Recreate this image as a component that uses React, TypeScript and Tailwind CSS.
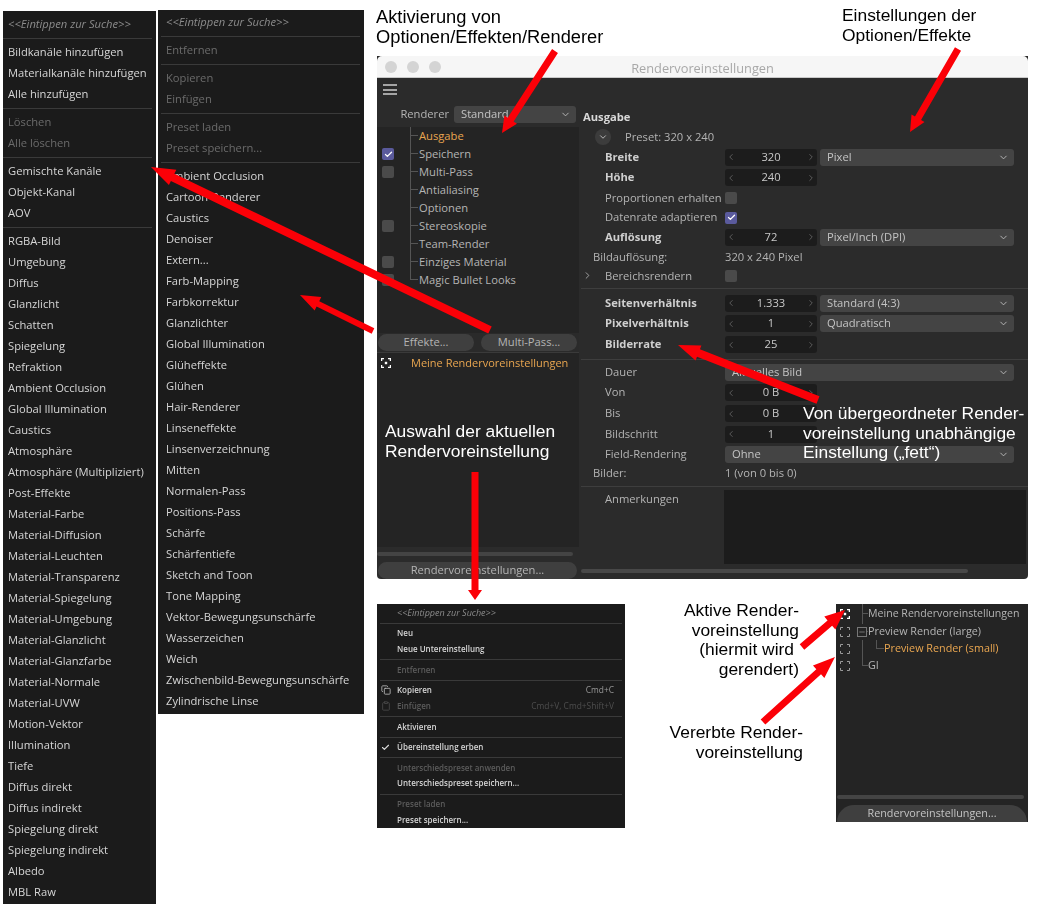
import { Check, ChevronDown, ChevronLeft, ChevronRight, Clipboard, Copy, Minus } from 'lucide-react';

const sans = 'font-["Open_Sans",sans-serif]';

// '-' is a divider, '~' marks a greyed out entry
const channelMenu = [
    '-', 'Bildkanäle hinzufügen', 'Materialkanäle hinzufügen', 'Alle hinzufügen', '-',
    '~Löschen', '~Alle löschen', '-',
    'Gemischte Kanäle', 'Objekt-Kanal', 'AOV', '-',
    'RGBA-Bild', 'Umgebung', 'Diffus', 'Glanzlicht', 'Schatten', 'Spiegelung', 'Refraktion',
    'Ambient Occlusion', 'Global Illumination', 'Caustics', 'Atmosphäre', 'Atmosphäre (Multipliziert)',
    'Post-Effekte', 'Material-Farbe', 'Material-Diffusion', 'Material-Leuchten', 'Material-Transparenz',
    'Material-Spiegelung', 'Material-Umgebung', 'Material-Glanzlicht', 'Material-Glanzfarbe',
    'Material-Normale', 'Material-UVW', 'Motion-Vektor', 'Illumination', 'Tiefe', 'Diffus direkt',
    'Diffus indirekt', 'Spiegelung direkt', 'Spiegelung indirekt', 'Albedo', 'MBL Raw',
];

const effectMenu = [
    '-', '~Entfernen', '-', '~Kopieren', '~Einfügen', '-', '~Preset laden', '~Preset speichern...', '-',
    'Ambient Occlusion', 'Cartoon-Renderer', 'Caustics', 'Denoiser', 'Extern...', 'Farb-Mapping',
    'Farbkorrektur', 'Glanzlichter', 'Global Illumination', 'Glüheffekte', 'Glühen', 'Hair-Renderer',
    'Linseneffekte', 'Linsenverzeichnung', 'Mitten', 'Normalen-Pass', 'Positions-Pass', 'Schärfe',
    'Schärfentiefe', 'Sketch and Toon', 'Tone Mapping', 'Vektor-Bewegungsunschärfe', 'Wasserzeichen',
    'Weich', 'Zwischenbild-Bewegungsunschärfe', 'Zylindrische Linse',
];

const treeItems = [
    { label: 'Ausgabe', box: '', active: true },
    { label: 'Speichern', box: 'on' },
    { label: 'Multi-Pass', box: 'off' },
    { label: 'Antialiasing', box: '' },
    { label: 'Optionen', box: '' },
    { label: 'Stereoskopie', box: 'off' },
    { label: 'Team-Render', box: '' },
    { label: 'Einziges Material', box: 'off' },
    { label: 'Magic Bullet Looks', box: 'off' },
];

function BigMenu({ items, className }: { items: string[]; className: string }) {
    return (
        <div className={`absolute bg-[#1b1b1b] text-[11.2px] ${sans} blur-[0.25px] ${className}`}>
            <div className="h-[21px] flex items-center pl-[5px] italic text-[#8c8c8c]">&lt;&lt;Eintippen zur Suche&gt;&gt;</div>
            {items.map((item, idx) => {
                if (item === '-') {
                    return <div key={idx} className="h-[7px] pt-[3px]"><div className="h-px bg-[#3a3a3a]" /></div>;
                }
                const off = item.startsWith('~');
                return (
                    <div key={idx} className={`h-[21px] flex items-center pl-[5px] whitespace-nowrap ${off ? 'text-[#6b6b6b]' : 'text-[#d6d6d6]'}`}>
                        {off ? item.slice(1) : item}
                    </div>
                );
            })}
        </div>
    );
}

function Box({ on }: { on?: boolean }) {
    return (
        <span className={`w-[12px] h-[12px] rounded-[2px] flex items-center justify-center shrink-0 ${on ? 'bg-[#5a5a9c]' : 'bg-[#4a4a4a]'}`}>
            {on && <Check size={9} strokeWidth={3.5} className="text-white" />}
        </span>
    );
}

function Tick({ last, w = 'w-[8px]', h = 'h-[18px]' }: { last?: boolean; w?: string; h?: string }) {
    return (
        <span className={`${w} ${h} flex flex-col shrink-0`}>
            <span className="h-1/2 border-b border-l border-[#555]" />
            {!last && <span className="h-1/2 border-l border-[#555]" />}
        </span>
    );
}

function TargetIcon({ active }: { active?: boolean }) {
    const color = active ? '#ffffff' : '#9a9a9a';
    return (
        <svg width="10" height="10" viewBox="0 0 10 10" fill="none" stroke={color} strokeWidth={active ? 1.5 : 1} className="shrink-0">
            <path d="M0.5 3V0.5H3M7 0.5H9.5V3M9.5 7V9.5H7M3 9.5H0.5V7" />
            {active && <rect x="3.8" y="3.8" width="2.4" height="2.4" fill={color} stroke="none" />}
        </svg>
    );
}

function NumField({ value }: { value: string }) {
    return (
        <div className="w-[92px] h-[17px] rounded-[3px] bg-[#1c1c1c] flex items-center justify-between px-[1px] text-[#c8c8c8]">
            <ChevronLeft size={10} className="text-[#666]" />
            <span>{value}</span>
            <ChevronRight size={10} className="text-[#666]" />
        </div>
    );
}

function Drop({ value, className = 'w-[194px]' }: { value: string; className?: string }) {
    return (
        <div className={`h-[17px] rounded-[3px] bg-[#444] flex items-center justify-between pl-[7px] pr-[5px] text-[#c4c4c4] ${className}`}>
            <span>{value}</span>
            <ChevronDown size={11} className="text-[#bbb]" />
        </div>
    );
}

function Row({ label, bold, h = 'h-[20px]', children }: { label: string; bold?: boolean; h?: string; children?: React.ReactNode }) {
    return (
        <div className={`flex items-center ${h}`}>
            <div className={`w-[146px] pl-[26px] whitespace-nowrap ${bold ? 'font-bold text-[#cfcfcf]' : 'text-[#b4b4b4]'}`}>{label}</div>
            <div className="flex items-center gap-[3px]">{children}</div>
        </div>
    );
}

function Line({ h, top }: { h: string; top: string }) {
    return <div className={`${h} ${top} pl-[2px]`}><div className="h-px bg-[#3e3e3e]" /></div>;
}

function RenderWindow() {
    return (
        <div className={`absolute left-[377px] top-[56px] w-[651px] h-[523px] rounded-b-[4px] overflow-hidden bg-[#2b2b2b] text-[11.2px] ${sans} blur-[0.25px]`}>
            <div className="relative h-[22px] bg-[#f6f6f6] border-b border-[#c9c9c9] rounded-t-[5px] flex items-center pl-[8px] gap-[10px]">
                <span className="w-[12px] h-[12px] rounded-full bg-[#d4d4d4]" />
                <span className="w-[12px] h-[12px] rounded-full bg-[#d4d4d4]" />
                <span className="w-[12px] h-[12px] rounded-full bg-[#d4d4d4]" />
                <span className="absolute inset-x-0 top-[3px] text-center text-[12.8px] text-[#a8a8a8]">Rendervoreinstellungen</span>
            </div>
            <div className="flex h-[501px]">
                <div className="w-[202px] flex flex-col shrink-0">
                    <div className="h-[28px] pl-[6px] pt-[6px]">
                        <div className="w-[14px] flex flex-col gap-[2.5px]">
                            <span className="h-[2px] bg-[#a5a5a5]" />
                            <span className="h-[2px] bg-[#a5a5a5]" />
                            <span className="h-[2px] bg-[#a5a5a5]" />
                        </div>
                    </div>
                    <div className="h-[17px] flex items-center">
                        <span className="w-[77px] text-right pr-[5px] text-[#b4b4b4]">Renderer</span>
                        <Drop value="Standard" className="w-[122px]" />
                    </div>
                    <div className="h-[4px]" />
                    <div className="flex-1 min-h-0 bg-[#242424] flex flex-col">
                        <div className="h-[206px]">
                            {treeItems.map((item, idx) => (
                                <div key={item.label} className="h-[18px] flex items-center">
                                    <span className="w-[33px] pl-[5px] shrink-0">{item.box && <Box on={item.box === 'on'} />}</span>
                                    <Tick last={idx === treeItems.length - 1} />
                                    <span className={`pl-[1px] ${item.active ? 'text-[#e9a650]' : 'text-[#b4b4b4]'}`}>{item.label}</span>
                                </div>
                            ))}
                        </div>
                        <div className="h-[20px] bg-[#2a2a2a] flex items-start gap-[7px] pl-[1px] text-[#b4b4b4] border-b border-[#3a3a3a]">
                            <div className="w-[96px] h-[17px] mt-[1px] rounded-full bg-[#3f3f3f] flex items-center justify-center">Effekte...</div>
                            <div className="w-[96px] h-[17px] mt-[1px] rounded-full bg-[#3f3f3f] flex items-center justify-center">Multi-Pass...</div>
                        </div>
                        <div className="h-[18px] mt-[1px] flex items-center pl-[4px]">
                            <TargetIcon active />
                            <span className="w-[20px]" />
                            <span className="text-[#e9a650] text-[11px]">Meine Rendervoreinstellungen</span>
                        </div>
                    </div>
                    <div className="h-[32px] flex flex-col">
                        <div className="h-[4px] mt-[5px] w-[196px] rounded-full bg-[#444]" />
                        <div className="w-[199px] h-[17px] ml-[1px] mt-[6px] rounded-full bg-[#3f3f3f] flex items-center justify-center text-[#b4b4b4]">Rendervoreinstellungen...</div>
                    </div>
                </div>

                <div className="flex-1 pt-[30px] min-w-0">
                    <div className="h-[19px] pl-[4px] flex items-center font-bold text-[#d8d8d8]">Ausgabe</div>
                    <div className="h-[20px] pl-[16px] flex items-center text-[#b4b4b4]">
                        <span className="w-[16px] h-[16px] rounded-full bg-[#3c3c3c] flex items-center justify-center mr-[14px]">
                            <ChevronDown size={10} className="text-[#ccc]" />
                        </span>
                        Preset: 320 x 240
                    </div>
                    <Row label="Breite" bold><NumField value="320" /><Drop value="Pixel" /></Row>
                    <Row label="Höhe" bold h="h-[21px]"><NumField value="240" /></Row>
                    <Row label="Proportionen erhalten"><Box /></Row>
                    <Row label="Datenrate adaptieren" h="h-[19px]"><Box on /></Row>
                    <Row label="Auflösung" bold><NumField value="72" /><Drop value="Pixel/Inch (DPI)" /></Row>
                    <div className="h-[20px] flex items-center text-[#b4b4b4]">
                        <span className="w-[146px] pl-[14px]">Bildauflösung:</span>
                        320 x 240 Pixel
                    </div>
                    <div className="relative">
                        <ChevronRight size={11} className="absolute left-[3px] top-[3px] text-[#aaa]" />
                        <Row label="Bereichsrendern" h="h-[18px]"><Box /></Row>
                    </div>
                    <Line h="h-[8px]" top="pt-[3px]" />
                    <Row label="Seitenverhältnis" bold><NumField value="1.333" /><Drop value="Standard (4:3)" /></Row>
                    <Row label="Pixelverhältnis" bold h="h-[21px]"><NumField value="1" /><Drop value="Quadratisch" /></Row>
                    <Row label="Bilderrate" bold h="h-[21px]"><NumField value="25" /></Row>
                    <Line h="h-[7px]" top="pt-[4px]" />
                    <Row label="Dauer"><Drop value="Aktuelles Bild" className="w-[289px]" /></Row>
                    <Row label="Von" h="h-[21px]"><NumField value="0 B" /></Row>
                    <Row label="Bis" h="h-[21px]"><NumField value="0 B" /></Row>
                    <Row label="Bildschritt"><NumField value="1" /></Row>
                    <Row label="Field-Rendering"><Drop value="Ohne" className="w-[289px]" /></Row>
                    <div className="h-[18px] flex items-center text-[#b4b4b4]">
                        <span className="w-[146px] pl-[14px]">Bilder:</span>
                        1 (von 0 bis 0)
                    </div>
                    <Line h="h-[8px]" top="pt-[4px]" />
                    <div className="flex h-[74px]">
                        <div className="w-[145px] pl-[26px] pt-[1px] text-[#b4b4b4]">Anmerkungen</div>
                        <div className="w-[302px] bg-[#1c1c1c]" />
                    </div>
                    <div className="h-[4px] mt-[5px] ml-[2px] w-[387px] rounded-full bg-[#484848]" />
                </div>
            </div>
        </div>
    );
}

const presetMenu: (string | { text: string; off?: boolean; key?: string; icon?: string })[] = [
    '-', { text: 'Neu' }, { text: 'Neue Untereinstellung' }, '-', { text: 'Entfernen', off: true }, '-',
    { text: 'Kopieren', key: 'Cmd+C', icon: 'copy' }, { text: 'Einfügen', off: true, key: 'Cmd+V, Cmd+Shift+V', icon: 'paste' }, '-',
    { text: 'Aktivieren' }, '-', { text: 'Übereinstellung erben', icon: 'check' }, '-',
    { text: 'Unterschiedspreset anwenden', off: true }, { text: 'Unterschiedspreset speichern...' }, '-',
    { text: 'Preset laden', off: true }, { text: 'Preset speichern...' },
];

function PresetMenu() {
    return (
        <div className={`absolute left-[377px] top-[604px] w-[248px] h-[224px] pt-[1px] bg-[#1b1b1b] text-[8px] ${sans} blur-[0.4px]`}>
            <div className="h-[15.5px] flex items-center pl-[20px] italic text-[9px] text-[#8c8c8c]">&lt;&lt;Eintippen zur Suche&gt;&gt;</div>
            {presetMenu.map((item, idx) => {
                if (typeof item === 'string') {
                    return <div key={idx} className="h-[5.2px] px-[3px] pt-[2.4px]"><div className="h-px bg-[#3a3a3a]" /></div>;
                }
                return (
                    <div key={idx} className={`h-[15.5px] flex items-center justify-between pr-[11px] whitespace-nowrap font-semibold ${item.off ? 'text-[#5c5c5c]' : 'text-[#d6d6d6]'}`}>
                        <span className="flex items-center">
                            <span className="w-[20px] pl-[4px] flex">
                                {item.icon === 'copy' && <Copy size={10} className="text-[#bbb]" />}
                                {item.icon === 'paste' && <Clipboard size={10} className="text-[#4a4a4a]" />}
                                {item.icon === 'check' && <Check size={9} strokeWidth={3} className="text-[#ddd]" />}
                            </span>
                            {item.text}
                        </span>
                        {item.key && <span className={`font-normal text-[8.4px] ${item.off ? 'text-[#4e4e4e]' : 'text-[#9a9a9a]'}`}>{item.key}</span>}
                    </div>
                );
            })}
        </div>
    );
}

function PresetPanel() {
    return (
        <div className={`absolute left-[836px] top-[604px] w-[192px] h-[218px] bg-[#242424] text-[10.8px] text-[#b4b4b4] ${sans} blur-[0.25px] flex flex-col`}>
            <div className="flex-1">
                <div className="h-[20px] flex items-center pl-[4px]">
                    <TargetIcon active />
                    <span className="w-[12px]" />
                    <Tick w="w-[6px]" h="h-[20px]" />
                    <span className="whitespace-nowrap text-[10.6px]">Meine Rendervoreinstellungen</span>
                </div>
                <div className="h-[17px] -mt-[1px] flex items-center pl-[4px]">
                    <TargetIcon />
                    <span className="w-[7px]" />
                    <span className="w-[10px] h-[10px] border border-[#777] flex items-center justify-center shrink-0">
                        <Minus size={8} className="text-[#999]" />
                    </span>
                    <span className="w-[1px] h-px bg-[#555]" />
                    <span className="whitespace-nowrap">Preview Render (large)</span>
                </div>
                <div className="h-[17px] flex items-center pl-[4px]">
                    <TargetIcon />
                    <span className="w-[12px] h-full" />
                    <span className="w-[14px] h-full border-l border-[#555]" />
                    <Tick last h="h-[17px]" />
                    <span className="text-[#e9a650] font-medium whitespace-nowrap">Preview Render (small)</span>
                </div>
                <div className="h-[17px] flex items-center pl-[4px]">
                    <TargetIcon />
                    <span className="w-[12px]" />
                    <Tick last w="w-[6px]" h="h-[17px]" />
                    <span>GI</span>
                </div>
            </div>
            <div className="h-[4px] w-[187px] ml-[1px] rounded-full bg-[#444]" />
            <div className="w-[190px] h-[17px] mt-[6px] ml-[1px] rounded-t-full rounded-b-[8px] bg-[#3f3f3f] flex items-center justify-center text-[#c4c4c4]">Rendervoreinstellungen...</div>
        </div>
    );
}

// shaft from start to the tip, with a head of the given length and width
function Arrow({ from, to, w = 6, head = 16, spread = 15 }: { from: number[]; to: number[]; w?: number; head?: number; spread?: number }) {
    const dx = to[0] - from[0];
    const dy = to[1] - from[1];
    const len = Math.hypot(dx, dy);
    const ux = dx / len;
    const uy = dy / len;
    const nx = -uy;
    const ny = ux;
    const bx = to[0] - ux * head;
    const by = to[1] - uy * head;
    const pts = [
        [from[0] + (nx * w) / 2, from[1] + (ny * w) / 2],
        [bx + (nx * w) / 2, by + (ny * w) / 2],
        [bx + (nx * spread) / 2, by + (ny * spread) / 2],
        to,
        [bx - (nx * spread) / 2, by - (ny * spread) / 2],
        [bx - (nx * w) / 2, by - (ny * w) / 2],
        [from[0] - (nx * w) / 2, from[1] - (ny * w) / 2],
    ];
    return <polygon points={pts.map((p) => p.join(',')).join(' ')} fill="#fb0007" />;
}

const labelFont = 'font-["Liberation_Sans",Arial,sans-serif] text-[17.4px] leading-[19.5px]';

export default function App() {
    return (
        <div className="relative w-[1038px] h-[914px] bg-white overflow-hidden">
            <BigMenu items={channelMenu} className="left-[3px] top-[11px] w-[153px] h-[893px] pt-[3px] pr-[4px]" />
            <BigMenu items={effectMenu} className="left-[158px] top-[10px] w-[206px] h-[704px] pt-[2px] pl-[3px] pr-[4px]" />
            <RenderWindow />
            <PresetMenu />
            <PresetPanel />

            <svg className="absolute inset-0 pointer-events-none" width="1038" height="914">
                <Arrow from={[555, 51]} to={[502, 133]} w={7} />
                <Arrow from={[958, 49]} to={[910, 132]} w={7} />
                <Arrow from={[490, 330]} to={[151, 167]} w={8} head={24} spread={17} />
                <Arrow from={[373, 331]} to={[300, 295]} w={6} head={20} spread={15} />
                <Arrow from={[475, 472]} to={[475, 600]} w={7} head={10} spread={14} />
                <Arrow from={[818, 400]} to={[678, 345]} w={8} head={22} spread={16} />
                <Arrow from={[802, 647]} to={[845, 610]} w={7} head={20} spread={17} />
                <Arrow from={[763, 722]} to={[835, 657]} w={7} head={22} spread={17} />
            </svg>

            <div className={`absolute left-[376px] top-[7px] text-black whitespace-nowrap ${labelFont} text-[18.3px]`}>Aktivierung von<br />Optionen/Effekten/Renderer</div>
            <div className={`absolute left-[842px] top-[6px] text-black whitespace-nowrap ${labelFont}`}>Einstellungen der<br />Optionen/Effekte</div>
            <div className={`absolute left-[385px] top-[422px] text-white whitespace-nowrap ${labelFont}`}>Auswahl der aktuellen<br />Rendervoreinstellung</div>
            <div className={`absolute left-[803px] top-[404px] text-white whitespace-nowrap ${labelFont}`}>Von übergeordneter Render-<br />voreinstellung unabhängige<br />Einstellung („fett“)</div>
            <div className={`absolute right-[239px] top-[601px] text-black text-right whitespace-nowrap ${labelFont}`}>
                Aktive Render-<br />voreinstellung<br /><span className="pr-[5px]">(hiermit wird</span><br />gerendert)
            </div>
            <div className={`absolute right-[235px] top-[723px] text-black text-right whitespace-nowrap ${labelFont}`}>Vererbte Render-<br />voreinstellung</div>
        </div>
    );
}
